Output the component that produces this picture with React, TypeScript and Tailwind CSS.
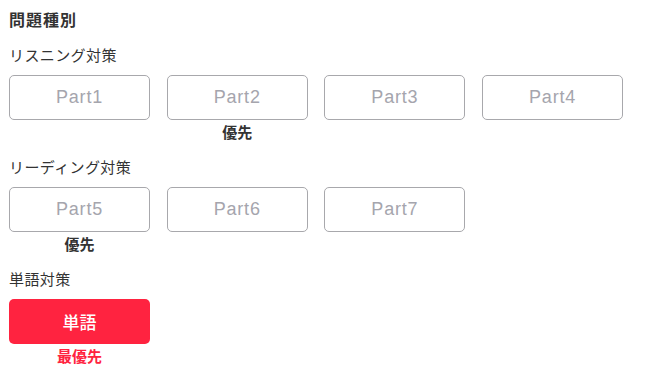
import React from 'react'

const font = { fontFamily: '"Noto Sans CJK JP", "Liberation Sans", sans-serif' }
const latin = { fontFamily: '"Liberation Sans", "Noto Sans CJK JP", sans-serif' }

type Item = { label: string; tag?: string; active?: boolean; top?: boolean }

function Row({ title, items }: { title: string; items: Item[] }) {
  return (
    <div>
      <p className="h-[22px] text-[15px] leading-[22px] tracking-[0.4px] text-[#333]">{title}</p>
      <div className="mt-[9px] flex gap-[16.7px]">
        {items.map((it) => (
          <div key={it.label} className="flex w-[141px] flex-col items-center">
            <button
              className={
                it.active
                  ? 'flex h-[45px] w-full items-center justify-center rounded-[5px] bg-[#ff2340] text-[17px] font-medium text-white'
                  : 'flex h-[45px] w-full items-center justify-center rounded-[5px] border border-[#a8a8ac] bg-white text-[18px] tracking-[0.8px] text-[#a5a5ad]'
              }
              style={it.active ? font : latin}
            >
              {it.label}
            </button>
            <span
              className={
                it.top
                  ? 'h-[24px] text-[15px] font-bold leading-[24px] text-[#ff2340]'
                  : 'h-[24px] text-[15px] font-bold leading-[24px] text-[#333]'
              }
            >
              {it.tag}
            </span>
          </div>
        ))}
      </div>
    </div>
  )
}

export default function App() {
  return (
    <div className="h-[379px] w-[649px] bg-white px-[9px] pt-[8px]" style={font}>
      <h2 className="h-[22px] text-[16px] font-bold leading-[22px] tracking-[1px] text-[#333]">問題種別</h2>
      <div className="mt-[14px] space-y-[12px]">
        <Row
          title="リスニング対策"
          items={[{ label: 'Part1' }, { label: 'Part2', tag: '優先' }, { label: 'Part3' }, { label: 'Part4' }]}
        />
        <Row
          title="リーディング対策"
          items={[{ label: 'Part5', tag: '優先' }, { label: 'Part6' }, { label: 'Part7' }]}
        />
        <Row title="単語対策" items={[{ label: '単語', tag: '最優先', active: true, top: true }]} />
      </div>
    </div>
  )
}
